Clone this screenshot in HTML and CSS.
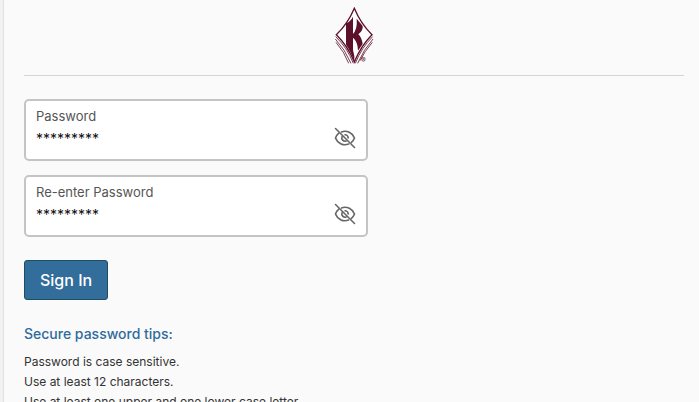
FILE: index.html
```
<!DOCTYPE html>
<html lang="en">
<head>
    <meta charset="UTF-8">
    <meta name="viewport" content="width=device-width, initial-scale=1.0">
    <title>Sign In</title>
    <link rel="stylesheet" href="styles.css">
</head>
<body>

    <div class="page">
        <header class="header">
            <svg class="logo" viewBox="27 21 120 174" role="img" aria-label="K diamond logo">
                <path class="logo-line" d="M88 25 Q108 73 141 104 Q108 137 88 186 Q68 137 34 104 Q68 73 88 25 Z"/>
                <!-- stem -->
                <path class="logo-fill" d="M63 70 Q76 66 84 50 V150 L88 168 V186 Q78 155 63 134 Z"/>
                <!-- arm and leg -->
                <path class="logo-fill" d="M82 104 Q98 90 95 56 L113 78 Q115 92 100 103 Q110 112 113 132 L99 152 Q98 122 82 112 Z"/>
                <!-- rays under the diamond -->
                <path class="logo-rays" d="M32 110 Q66 142 85 190 M31 117 Q60 148 78 190 M33 127 Q58 155 71 190"/>
                <path class="logo-rays" d="M143 110 Q110 142 91 190 M144 117 Q116 148 98 190 M142 127 Q118 155 105 182"/>
                <text class="logo-mark" x="108" y="190">®</text>
            </svg>
        </header>

        <form class="signin-form">
            <div class="field">
                <div class="field-text">
                    <label for="password">Password</label>
                    <input type="text" id="password" value="*********" autocomplete="off">
                </div>
                <button type="button" class="toggle" aria-label="Show password">
                    <svg viewBox="0 0 22 22">
                        <path d="M7.5 4.9 C13 2.8 18.5 6 20.5 11 C19.8 12.8 18.7 14.3 17.4 15.4 M4.8 6.2 C3.3 7.5 2.1 9.2 1.5 11 C4 17 9.6 19 14.6 17"/>
                        <path d="M8.1 9.6 C7 12.3 9.4 14.9 12.2 14 M11 7.8 C12.8 7.8 14.2 9.4 14.2 11"/>
                        <path d="M1.5 1.5 L20.5 20.5"/>
                    </svg>
                </button>
            </div>

            <div class="field">
                <div class="field-text">
                    <label for="confirmPassword">Re-enter Password</label>
                    <input type="text" id="confirmPassword" value="*********" autocomplete="off">
                </div>
                <button type="button" class="toggle" aria-label="Show re-entered password">
                    <svg viewBox="0 0 22 22">
                        <path d="M7.5 4.9 C13 2.8 18.5 6 20.5 11 C19.8 12.8 18.7 14.3 17.4 15.4 M4.8 6.2 C3.3 7.5 2.1 9.2 1.5 11 C4 17 9.6 19 14.6 17"/>
                        <path d="M8.1 9.6 C7 12.3 9.4 14.9 12.2 14 M11 7.8 C12.8 7.8 14.2 9.4 14.2 11"/>
                        <path d="M1.5 1.5 L20.5 20.5"/>
                    </svg>
                </button>
            </div>

            <button type="submit" class="submit">Sign In</button>
        </form>

        <section class="tips">
            <h2>Secure password tips:</h2>
            <p>Password is case sensitive.</p>
            <p>Use at least 12 characters.</p>
            <p>Use at least one upper and one lower case letter.</p>
        </section>
    </div>

</body>
</html>
```
FILE: styles.css
```
* {
    box-sizing: border-box;
}
html {
    height: 100%;
    overflow: hidden;
}
body {
    margin: 0;
    min-height: 100%;
    padding-left: 4px;
    background-color: #f2f2f2;
    font-family: Inter, sans-serif;
}
.page {
    min-height: 100vh;
    padding: 0 15px 0 20px;
    background-color: #fafafa;
    box-shadow: 0 0 2px rgba(0, 0, 0, 0.2);
}
.header {
    display: flex;
    justify-content: center;
    padding: 7px 0 10px;
    border-bottom: 1px solid #d4d4d4;
}
.logo {
    display: block;
    width: 40px;
    height: 58px;
}
.logo-line {
    fill: #fff;
    stroke: #5c1029;
    stroke-width: 4;
}
.logo-fill {
    fill: #5c1029;
}
.logo-rays {
    fill: none;
    stroke: #5c1029;
    stroke-width: 2.4;
}
.logo-mark {
    fill: #5c1029;
    font-size: 21px;
}
.signin-form {
    display: flex;
    flex-direction: column;
    align-items: flex-start;
    gap: 14px;
    padding-top: 23px;
}
.field {
    display: flex;
    align-items: center;
    justify-content: space-between;
    width: 100%;
    max-width: 344px;
    padding: 6px 10px;
    border: 2px solid #c4c4c4;
    border-radius: 5px;
    background-color: #fff;
}
.field-text {
    flex: 1;
    padding-bottom: 2px;
}
.field label {
    display: block;
    font-size: 13px;
    line-height: 18px;
    color: #555;
}
.field input {
    display: block;
    width: 100%;
    height: 26px;
    padding: 0;
    border: none;
    outline: none;
    background: none;
    font-family: inherit;
    font-size: 14px;
    color: #111;
}
.toggle {
    padding: 16px 0 0;
    border: none;
    background: none;
    cursor: pointer;
}
.toggle svg {
    display: block;
    width: 22px;
    height: 22px;
    fill: none;
    stroke: #666;
    stroke-width: 1.6;
    stroke-linecap: round;
}
.submit {
    margin-top: 9px;
    padding: 0 15px;
    border: 1px solid #1d4f5c;
    border-radius: 3px;
    background-color: #336d9b;
    color: #fff;
    font-family: inherit;
    font-size: 16px;
    font-weight: 500;
    line-height: 38px;
    cursor: pointer;
}
.tips {
    padding-top: 24px;
}
.tips h2 {
    margin: 0 0 8px;
    font-size: 14px;
    font-weight: 500;
    line-height: 20px;
    color: #2f6b9c;
}
.tips p {
    margin: 0;
    font-size: 12px;
    line-height: 20px;
    color: #333;
}
```
